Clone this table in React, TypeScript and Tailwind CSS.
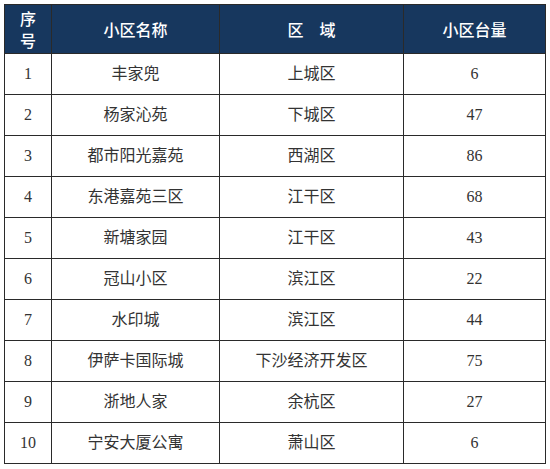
import React from "react";

const rows: [string, string, string, string][] = [
  ["1", "丰家兜", "上城区", "6"],
  ["2", "杨家沁苑", "下城区", "47"],
  ["3", "都市阳光嘉苑", "西湖区", "86"],
  ["4", "东港嘉苑三区", "江干区", "68"],
  ["5", "新塘家园", "江干区", "43"],
  ["6", "冠山小区", "滨江区", "22"],
  ["7", "水印城", "滨江区", "44"],
  ["8", "伊萨卡国际城", "下沙经济开发区", "75"],
  ["9", "浙地人家", "余杭区", "27"],
  ["10", "宁安大厦公寓", "萧山区", "6"],
];

const headCell =
  "flex items-center justify-center border-r border-b border-[#2a2a2a] bg-[#17375e] text-white text-[16px] font-medium h-[49px] text-center leading-[22px]";
const bodyCell =
  "flex items-center justify-center border-r border-b border-[#2a2a2a] text-[#333333] text-[16px] h-[41px]";

export default function App() {
  return (
    <div className="w-[550px] h-[469px] bg-white pt-[4px] pl-[4px]" style={{ fontFamily: '"Liberation Serif", "Noto Sans CJK SC", serif' }}>
      <div className="grid grid-cols-[47px_168px_184px_142px] w-[542px] border-l border-t border-[#2a2a2a]">
        <div className={headCell} style={{ fontFamily: '"Noto Sans CJK SC", sans-serif' }}>
          <span>序<br />号</span>
        </div>
        <div className={headCell} style={{ fontFamily: '"Noto Sans CJK SC", sans-serif' }}>小区名称</div>
        <div className={headCell} style={{ fontFamily: '"Noto Sans CJK SC", sans-serif' }}>区　域</div>
        <div className={headCell} style={{ fontFamily: '"Noto Sans CJK SC", sans-serif' }}>小区台量</div>
        {rows.map((r) => (
          <React.Fragment key={r[0]}>
            <div className={bodyCell}>{r[0]}</div>
            <div className={bodyCell}>{r[1]}</div>
            <div className={bodyCell}>{r[2]}</div>
            <div className={bodyCell}>{r[3]}</div>
          </React.Fragment>
        ))}
      </div>
    </div>
  );
}
